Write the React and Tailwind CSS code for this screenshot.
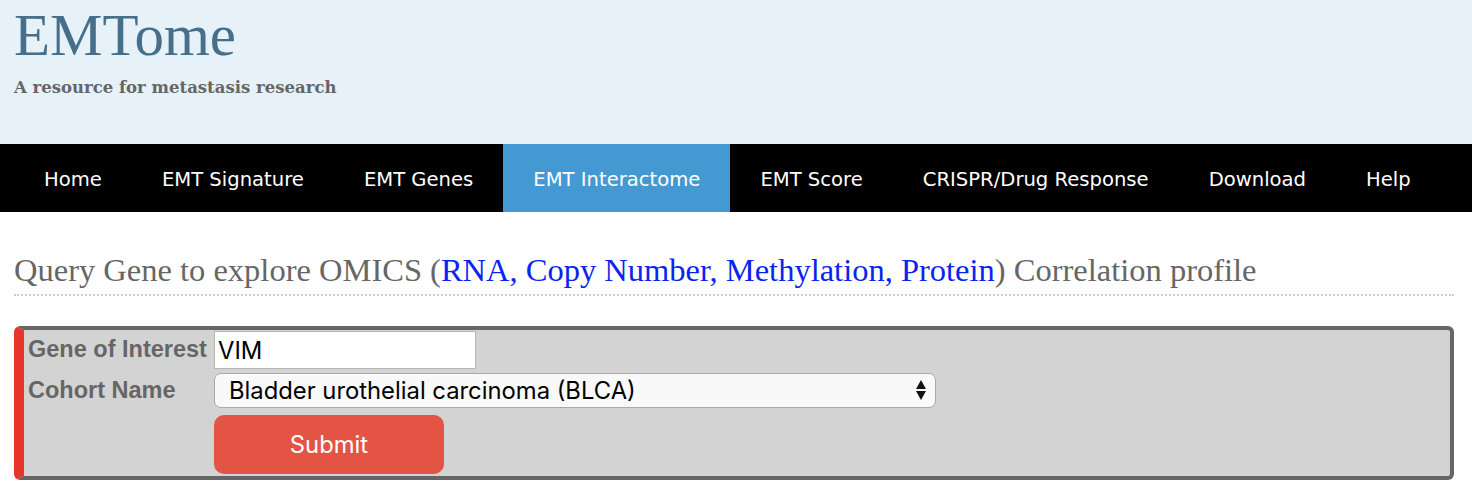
import React from 'react';

const navItems = [
    'Home',
    'EMT Signature',
    'EMT Genes',
    'EMT Interactome',
    'EMT Score',
    'CRISPR/Drug Response',
    'Download',
    'Help',
];

const serif = { fontFamily: '"Liberation Serif", "DejaVu Serif", serif' };

const App = () => {
    return (
        <div className="min-h-screen bg-white">
            <header className="bg-[#e6f1f8] h-[144px] px-[14px] pt-[2px]">
                <h1 className="text-[59px] leading-[66px] text-[#466f8c]" style={serif}>EMTome</h1>
                <p className="mt-[8px] text-[16.5px] font-bold text-[#666666] font-['DejaVu_Serif',serif]">
                    A resource for metastasis research
                </p>
            </header>

            <nav className="bg-black h-[68px] pl-[14px] flex items-stretch">
                {navItems.map((item) => (
                    <a
                        key={item}
                        href="#"
                        className={`px-[30px] pt-[3px] flex items-center text-white text-[19.6px] font-['DejaVu_Sans',sans-serif] ${item === 'EMT Interactome' ? 'bg-[#4499d3]' : ''
                            }`}
                    >
                        {item}
                    </a>
                ))}
            </nav>

            <main className="pl-[14px] pr-[18px]">
                <h2
                    className="mt-[39px] pb-[5px] text-[32.5px] leading-[38px] text-[#666666] border-b-2 border-dotted border-[#cccccc]"
                    style={serif}
                >
                    Query Gene to explore OMICS (
                    <span className="text-[#0a24f0]">RNA, Copy Number, Methylation, Protein</span>
                    ) Correlation profile
                </h2>

                <form
                    className="mt-[30px] bg-[#d3d3d3] border-4 border-[#666666] border-l-[10px] border-l-[#e8352a] rounded-[6px] pl-[4px] pt-[1px] pb-[2px] font-['Liberation_Sans',Arial,sans-serif]"
                    onSubmit={(e) => e.preventDefault()}
                >
                    <div className="grid grid-cols-[186px_1fr] gap-y-[4px] items-center">
                        <label className="text-[23.5px] font-bold text-[#666666]">Gene of Interest</label>
                        <input
                            defaultValue="VIM"
                            className="w-[262px] h-[38px] bg-white border border-[#b5b5b5] px-[3px] text-[23.8px] text-black outline-none font-['Inter',sans-serif]"
                        />

                        <label className="text-[23.5px] font-bold text-[#666666]">Cohort Name</label>
                        <div className="relative w-[722px] h-[35px]">
                            <div className="h-full rounded-[7px] border border-[#a9a9a9] bg-[#f9f9f9] pl-[14px] flex items-center text-[23.8px] text-black font-['Inter',sans-serif]">
                                Bladder urothelial carcinoma (BLCA)
                            </div>
                            <div className="absolute right-[10px] top-[7px] flex flex-col items-center gap-[2px]">
                                <svg width="10" height="9" viewBox="0 0 10 9"><path d="M5 0 L10 9 L0 9 Z" fill="#111" /></svg>
                                <svg width="10" height="9" viewBox="0 0 10 9"><path d="M0 0 L10 0 L5 9 Z" fill="#111" /></svg>
                            </div>
                        </div>

                        <div />
                        <button
                            type="submit"
                            className="mt-[3px] w-[230px] h-[59px] rounded-[10px] bg-[#e35444] text-white text-[23.8px] font-['Inter',sans-serif]"
                        >
                            Submit
                        </button>
                    </div>
                </form>
            </main>
        </div>
    );
};

export default App;
